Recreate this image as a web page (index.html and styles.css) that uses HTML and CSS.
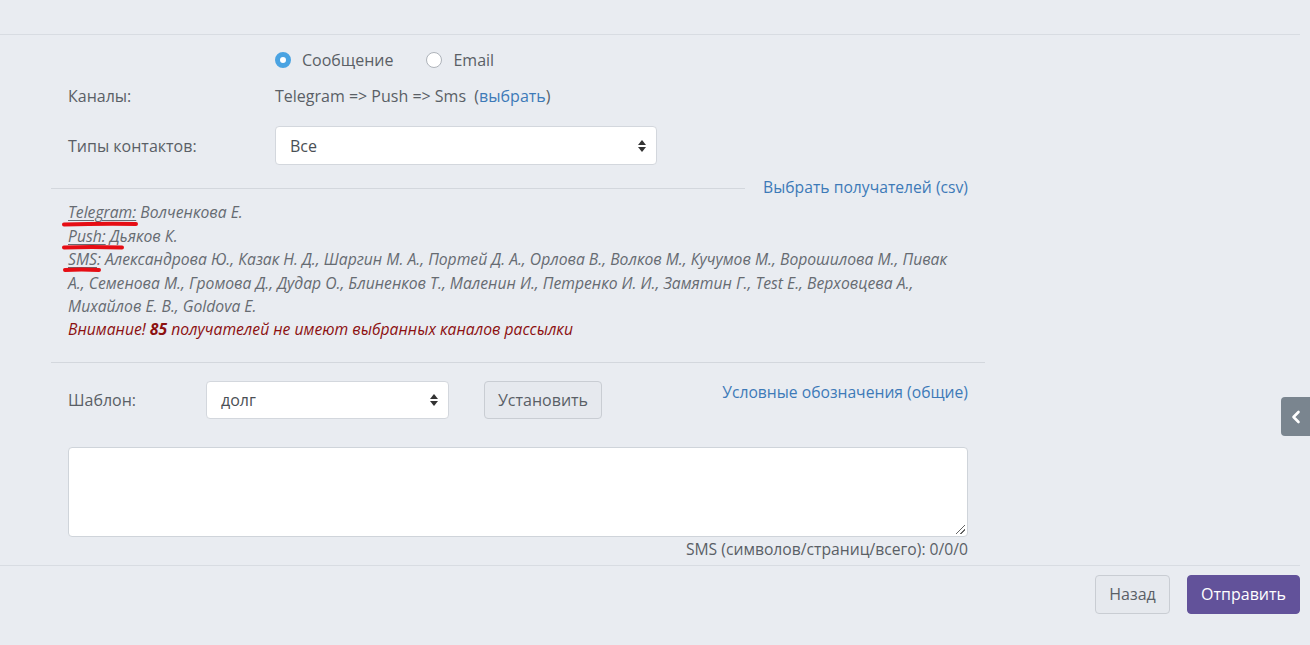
FILE: index.html
```html
<!DOCTYPE html>
<html lang="ru">
<head>
  <meta charset="UTF-8">
  <title>Рассылка</title>
  <link rel="stylesheet" href="styles.css">
</head>
<body>
  <div class="page">
    <div class="top-bar"></div>
    <div class="form">
      <div class="row row-radios">
        <div class="label"></div>
        <label class="radio"><span class="radio-dot checked"></span>Сообщение</label>
        <label class="radio"><span class="radio-dot"></span>Email</label>
      </div>
      <div class="row row-channels">
        <div class="label">Каналы:</div>
        <div class="value">Telegram =&gt; Push =&gt; Sms&nbsp; (<a href="#">выбрать</a>)</div>
      </div>
      <div class="row row-types">
        <div class="label">Типы контактов:</div>
        <div class="select select-wide">Все<span class="caret"></span></div>
      </div>
      <div class="split">
        <div class="split-line"></div>
        <a href="#" class="split-link">Выбрать получателей (csv)</a>
      </div>
      <div class="recipients">
        <svg class="marks" width="100" height="80" viewBox="0 0 100 80">
          <path d="M13 26.5 Q50 25.5 85 26" />
          <path d="M13 49.5 Q40 48.5 71 49.5" />
          <path d="M14 72 Q30 71 48 72" />
        </svg>
        <div><u>Telegram:</u> Волченкова Е.</div>
        <div><u>Push:</u> Дьяков К.</div>
        <div><u>SMS</u>: Александрова Ю., Казак Н. Д., Шаргин М. А., Портей Д. А., Орлова В., Волков М., Кучумов М., Ворошилова М., Пивак А., Семенова М., Громова Д., Дудар О., Блиненков Т., Маленин И., Петренко И. И., Замятин Г., Test E., Верховцева А., Михайлов Е. В., Goldova E.</div>
        <div class="warn">Внимание! <b>85</b> получателей не имеют выбранных каналов рассылки</div>
      </div>
      <div class="rule"></div>
      <div class="row row-template">
        <div class="label label-short">Шаблон:</div>
        <div class="select select-small">долг<span class="caret"></span></div>
        <button class="btn btn-light">Установить</button>
        <a href="#" class="legend-link">Условные обозначения (общие)</a>
      </div>
      <div class="text-box"><span class="grip"></span></div>
      <div class="counter">SMS (символов/страниц/всего): 0/0/0</div>
    </div>
    <div class="footer">
      <button class="btn btn-light btn-back">Назад</button>
      <button class="btn btn-primary">Отправить</button>
    </div>
  </div>
  <div class="side-tab">
    <svg width="12" height="14" viewBox="0 0 12 14"><path d="M8.5 2 L3.5 7 L8.5 12" /></svg>
  </div>
</body>
</html>
```
FILE: styles.css
```css
body {
  margin: 0;
  background: #e9ecf1;
  font-family: 'Open Sans', 'Noto Sans', sans-serif;
  font-size: 16px;
  color: #5a5f66;
  overflow: hidden;
}
a {
  color: #3d7ab8;
  text-decoration: none;
}
.page {
  width: 1300px;
}
.top-bar {
  height: 34px;
  border-bottom: 1px solid #d8dce2;
}
.form {
  margin-left: 51px;
  width: 934px;
}
.row {
  display: flex;
  align-items: center;
  padding: 0 17px;
}
.label {
  width: 207px;
  flex-shrink: 0;
}
.row-radios {
  margin-top: 13px;
  height: 24px;
}
.radio {
  display: flex;
  align-items: center;
  margin-right: 33px;
}
.radio-dot {
  width: 16px;
  height: 16px;
  box-sizing: border-box;
  border-radius: 50%;
  border: 1px solid #aeb3ba;
  background: #fff;
  margin-right: 11px;
}
.radio-dot.checked {
  border: 5px solid #4aa3e2;
  background: #fff;
}
.row-channels {
  margin-top: 12px;
  height: 24px;
}
.row-types {
  margin-top: 18px;
  height: 39px;
}
.select {
  position: relative;
  height: 39px;
  box-sizing: border-box;
  background: #fff;
  border: 1px solid #d3d7dd;
  border-radius: 4px;
  padding-left: 14px;
  display: flex;
  align-items: center;
  color: #4a4f55;
}
.select-wide {
  width: 382px;
}
.select-small {
  width: 243px;
  height: 38px;
}
.caret {
  position: absolute;
  right: 14px;
  top: 50%;
  margin-top: -6px;
  width: 0;
  height: 12px;
}
.caret::before,
.caret::after {
  content: "";
  position: absolute;
  left: -4px;
  border-left: 4px solid transparent;
  border-right: 4px solid transparent;
}
.caret::before {
  top: 0;
  border-bottom: 5px solid #333;
}
.caret::after {
  bottom: 0;
  border-top: 5px solid #333;
}
.split {
  display: flex;
  align-items: center;
  margin-top: 11px;
  height: 22px;
  padding-right: 17px;
}
.split-line {
  flex: 1;
  border-top: 1px solid #d3d7dd;
  margin-top: 2px;
}
.split-link {
  margin-left: 18px;
  font-size: 15.7px;
}
.recipients {
  position: relative;
  padding: 3.3px 24px 0 17px;
  font-size: 15.7px;
  font-style: italic;
  line-height: 23.4px;
  color: #666b71;
}
.recipients u {
  text-decoration-thickness: 1px;
  text-underline-offset: 2px;
}
.marks {
  position: absolute;
  left: 0;
  top: 0;
  overflow: visible;
}
.marks path {
  fill: none;
  stroke: #e60d14;
  stroke-width: 4;
  stroke-linecap: round;
}
.warn {
  color: #8c1010;
}
.warn b {
  font-weight: 700;
}
.rule {
  margin-top: 20px;
  border-top: 1px solid #d3d7dd;
}
.row-template {
  margin-top: 18px;
  align-items: flex-start;
}
.label-short {
  width: 138px;
  line-height: 38px;
}
.btn {
  font-family: inherit;
  font-size: 16px;
  height: 39px;
  border-radius: 4px;
  padding: 0 16px;
  cursor: pointer;
}
.btn-light {
  background: #e6e9ee;
  border: 1px solid #c9cdd3;
  color: #5a5f66;
}
.row-template .btn {
  margin-left: 35px;
  height: 38px;
  width: 118px;
  padding: 0;
}
.legend-link {
  margin-left: auto;
  font-size: 15.7px;
  line-height: 22px;
}
.text-box {
  position: relative;
  margin: 28px 17px 0 17px;
  height: 90px;
  box-sizing: border-box;
  background: #fff;
  border: 1px solid #cfd4da;
  border-radius: 4px;
}
.grip {
  position: absolute;
  right: 2px;
  bottom: 2px;
  width: 9px;
  height: 9px;
  background: linear-gradient(135deg, transparent 45%, #666 45%, #666 55%, transparent 55%, transparent 72%, #666 72%, #666 82%, transparent 82%);
}
.counter {
  text-align: right;
  padding-right: 17px;
  font-size: 15.7px;
  line-height: 22px;
  margin-top: 1px;
}
.footer {
  margin-top: 5px;
  border-top: 1px solid #d8dce2;
  padding-top: 9px;
  display: flex;
  justify-content: flex-end;
}
.btn-back {
  width: 75px;
  padding: 0;
  margin-right: 17px;
}
.btn-primary {
  background: #62529a;
  border: 1px solid #62529a;
  color: #fff;
  width: 113px;
  padding: 0;
}
.side-tab {
  position: absolute;
  left: 1281px;
  top: 397px;
  width: 29px;
  height: 39px;
  background: #7a858f;
  border-radius: 4px 0 0 4px;
  display: flex;
  align-items: center;
  justify-content: center;
}
.side-tab path {
  fill: none;
  stroke: #fff;
  stroke-width: 2.6;
  stroke-linecap: round;
  stroke-linejoin: round;
}
```
